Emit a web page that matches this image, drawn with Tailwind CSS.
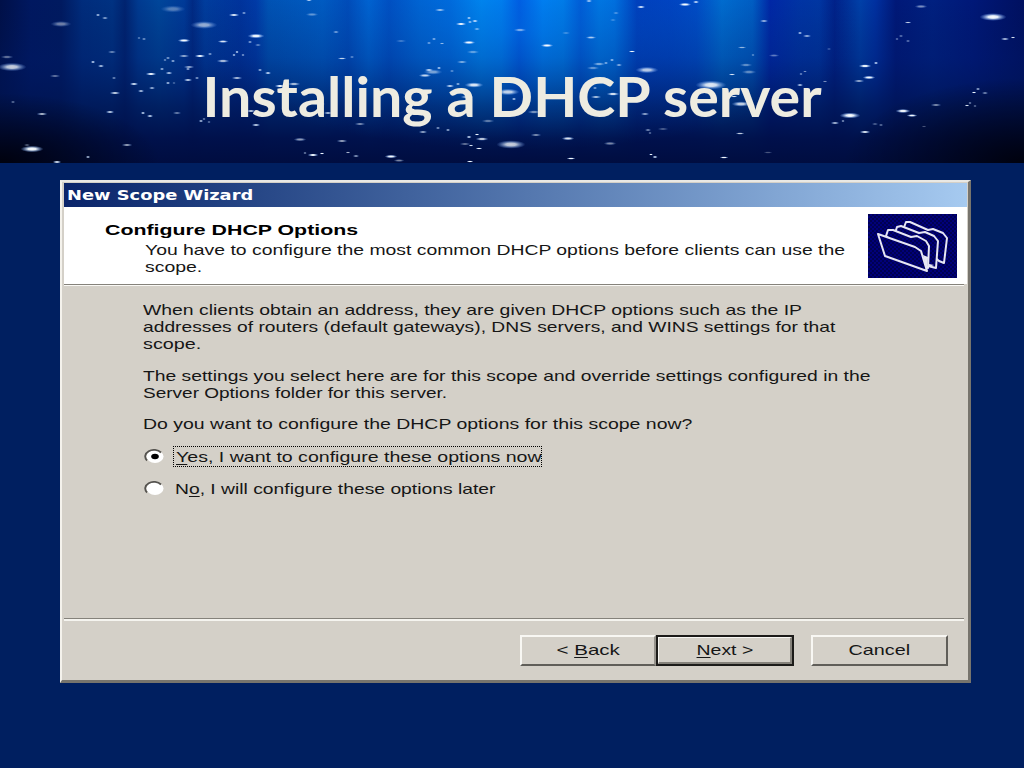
<!DOCTYPE html>
<html lang="en">
<head>
  <meta charset="UTF-8" />
  <title>Installing a DHCP server</title>
  <script src="https://cdn.jsdelivr.net/npm/@tailwindcss/browser@4"></script>
</head>
<body class="w-[1024px] h-[768px] overflow-hidden bg-[#001f60] font-['Liberation_Sans',sans-serif] text-[15px] text-[#161616]">
  <header class="relative h-[163px] overflow-hidden">
    <svg class="absolute inset-0" width="1024" height="163" viewBox="0 0 1024 163" preserveAspectRatio="none">
      <defs>
        <linearGradient id="rays" x1="0" x2="1" y1="0" y2="0">
          <stop offset="0" stop-color="#001048" />
          <stop offset=".03" stop-color="#001860" />
          <stop offset=".06" stop-color="#001a60" />
          <stop offset=".08" stop-color="#002c7c" />
          <stop offset=".11" stop-color="#003282" />
          <stop offset=".122" stop-color="#002370" />
          <stop offset=".135" stop-color="#003a90" />
          <stop offset=".155" stop-color="#00469a" />
          <stop offset=".18" stop-color="#003a98" />
          <stop offset=".188" stop-color="#002a84" />
          <stop offset=".2" stop-color="#003c9c" />
          <stop offset=".235" stop-color="#003098" />
          <stop offset=".25" stop-color="#0036a2" />
          <stop offset=".262" stop-color="#0050b0" />
          <stop offset=".315" stop-color="#0058bc" />
          <stop offset=".34" stop-color="#0044b0" />
          <stop offset=".36" stop-color="#0060cc" />
          <stop offset=".38" stop-color="#0046b8" />
          <stop offset=".41" stop-color="#0060cc" />
          <stop offset=".44" stop-color="#0068d8" />
          <stop offset=".47" stop-color="#008cf0" />
          <stop offset=".49" stop-color="#0082f0" />
          <stop offset=".507" stop-color="#0054e0" />
          <stop offset=".53" stop-color="#0084f4" />
          <stop offset=".55" stop-color="#0080e8" />
          <stop offset=".567" stop-color="#0054d0" />
          <stop offset=".585" stop-color="#0078e0" />
          <stop offset=".6" stop-color="#0070dc" />
          <stop offset=".622" stop-color="#0030b0" />
          <stop offset=".655" stop-color="#0038b8" />
          <stop offset=".68" stop-color="#0044c0" />
          <stop offset=".705" stop-color="#006ccc" />
          <stop offset=".735" stop-color="#005cc0" />
          <stop offset=".752" stop-color="#0020a0" />
          <stop offset=".78" stop-color="#0030a0" />
          <stop offset=".8" stop-color="#0034a0" />
          <stop offset=".815" stop-color="#002088" />
          <stop offset=".84" stop-color="#0040a8" />
          <stop offset=".855" stop-color="#0030a0" />
          <stop offset=".875" stop-color="#001878" />
          <stop offset=".91" stop-color="#002080" />
          <stop offset=".95" stop-color="#001878" />
          <stop offset="1" stop-color="#001060" />
        </linearGradient>
        <linearGradient id="depth" x1="0" x2="0" y1="0" y2="1">
          <stop offset="0" stop-color="#001550" stop-opacity="0" />
          <stop offset=".35" stop-color="#001860" stop-opacity=".3" />
          <stop offset=".65" stop-color="#001450" stop-opacity=".75" />
          <stop offset=".85" stop-color="#000f48" stop-opacity=".96" />
          <stop offset="1" stop-color="#000d40" />
        </linearGradient>
        <radialGradient id="glow" gradientUnits="userSpaceOnUse" cx="0" cy="0" r="1" gradientTransform="translate(520 30) scale(340 120)">
          <stop offset="0" stop-color="#0078f0" stop-opacity=".45" />
          <stop offset="1" stop-color="#0060d0" stop-opacity="0" />
        </radialGradient>
        <radialGradient id="corner">
          <stop offset="0" stop-color="#000008" stop-opacity=".9" />
          <stop offset="1" stop-color="#000008" stop-opacity="0" />
        </radialGradient>
        <radialGradient id="bubble">
          <stop offset="0" stop-color="#fff" />
          <stop offset=".35" stop-color="#f0f8ff" stop-opacity=".95" />
          <stop offset="1" stop-color="#70a8ff" stop-opacity="0" />
        </radialGradient>
      </defs>
      <rect width="1024" height="163" fill="url(#rays)" />
      <rect width="1024" height="163" fill="url(#depth)" />
      <rect width="1024" height="163" fill="url(#glow)" />
      <ellipse cx="0" cy="163" rx="160" ry="70" fill="url(#corner)" />
      <ellipse cx="1024" cy="163" rx="180" ry="85" fill="url(#corner)" />
      <g id="bubbles"></g>
    </svg>
    <h1 class="relative pt-[63px] text-center font-['Lato',sans-serif] text-[55px] leading-[66px] font-bold text-[#eeece1]"><span class="inline-block whitespace-nowrap" data-w="619">Installing a DHCP server</span></h1>
  </header>

  <main class="mt-[17px] ml-[60px] flex h-[503px] w-[911px] flex-col border-t-2 border-r-3 border-b-3 border-l-2 border-t-[#e9e8e4] border-r-[#77746d] border-b-[#77746d] border-l-[#f4f2ec] bg-[#d4d0c8] pt-px pr-px pl-0.5">
    <div class="h-6 bg-gradient-to-r from-[#0a246a] to-[#a6caf0] pl-[3px] font-['DejaVu_Sans',sans-serif] text-[14px] leading-6 font-bold text-white"><span class="inline-block origin-left whitespace-nowrap" data-w="186">New Scope Wizard</span></div>

    <div class="flex h-[77px] justify-between bg-white pr-[10px] pl-[41px]">
      <div class="pt-[14px]">
        <p class="h-5 leading-[18px] font-bold text-black"><span class="inline-block origin-left whitespace-nowrap" data-w="253">Configure DHCP Options</span></p>
        <div class="w-[700px] pl-10 leading-[17px]">
          <p class="h-[17px]"><span class="inline-block origin-left whitespace-nowrap" data-w="700">You have to configure the most common DHCP options before clients can use the</span></p>
          <p class="h-[17px]"><span class="inline-block origin-left whitespace-nowrap" data-w="57">scope.</span></p>
        </div>
      </div>
      <svg class="mt-[7px] h-16 w-[89px] shrink-0" viewBox="0 0 89 64">
        <defs>
          <pattern id="weave" width="4" height="4" patternUnits="userSpaceOnUse">
            <rect width="4" height="4" fill="#00007a" />
            <path d="M0 0h2v2H0zM2 2h2v2H2z" fill="#000052" />
          </pattern>
        </defs>
        <rect width="89" height="64" fill="url(#weave)" />
        <g fill="url(#weave)" stroke="#e6e6f4" stroke-width="2" stroke-linejoin="round">
          <path d="M35 16l3-8 4 0 18 8 5-1 10 4 4 5-3 25-5-2z" />
          <path d="M27 19l2-6 4-1 18 7 6-1 9 4 4 5-2 27-8-2z" />
          <path d="M18 22l2-6 5 0 18 7 6-1 9 5 3 5-1 22-7-2z" />
          <path d="M10 20l37 13 6 4 6 20-42-15z" />
        </g>
        <path d="M55 41l5 2-1 15zM61 50l5 1-5 2z" fill="#e6e6f4" />
      </svg>
    </div>

    <div class="mr-[3px] h-px bg-[#85827b]"></div>
    <div class="mr-[3px] h-px bg-[#faf9f5]"></div>

    <div class="h-[332px] pt-[15px] pl-[79px] leading-[17px]">
      <p class="h-[17px]"><span class="inline-block origin-left whitespace-nowrap" data-w="659">When clients obtain an address, they are given DHCP options such as the IP</span></p>
      <p class="h-[17px]"><span class="inline-block origin-left whitespace-nowrap" data-w="692">addresses of routers (default gateways), DNS servers, and WINS settings for that</span></p>
      <p class="h-[17px]"><span class="inline-block origin-left whitespace-nowrap" data-w="58">scope.</span></p>
      <p class="mt-[15px] h-[17px]"><span class="inline-block origin-left whitespace-nowrap" data-w="727">The settings you select here are for this scope and override settings configured in the</span></p>
      <p class="h-[17px]"><span class="inline-block origin-left whitespace-nowrap" data-w="304">Server Options folder for this server.</span></p>
      <p class="mt-[14px] h-[17px]"><span class="inline-block origin-left whitespace-nowrap" data-w="549">Do you want to configure the DHCP options for this scope now?</span></p>

      <div class="mt-[14px] flex h-[21px] items-center">
        <svg class="mr-[9px] ml-px h-4 w-5" viewBox="0 0 20 16">
          <ellipse cx="11" cy="7.500" rx="8.500" ry="6.500" fill="#fff" />
          <path d="M3 11.500a8 6 0 0 1 14-8" fill="none" stroke="#55534f" stroke-width="1.800" />
          <ellipse cx="11" cy="7.500" rx="3.800" ry="2.800" fill="#000" />
        </svg>
        <div class="h-[21px] w-[369px] border border-dotted border-black pl-0.5 leading-[19px]"><span class="inline-block origin-left whitespace-nowrap" data-w="365"><u class="underline-offset-2">Y</u>es, I want to configure these options now</span></div>
      </div>
      <div class="mt-[11px] flex h-[21px] items-center">
        <svg class="mr-[11px] ml-px h-4 w-5" viewBox="0 0 20 16">
          <ellipse cx="11" cy="7.500" rx="8.500" ry="6.500" fill="#fff" />
          <path d="M3 11.500a8 6 0 0 1 14-8" fill="none" stroke="#55534f" stroke-width="1.800" />
        </svg>
        <span class="inline-block origin-left whitespace-nowrap" data-w="320">N<u class="underline-offset-2">o</u>, I will configure these options later</span>
      </div>
    </div>

    <div class="mr-[3px] h-px bg-[#85827b]"></div>
    <div class="mr-[3px] h-0.5 bg-[#f5f4ef]"></div>

    <div class="flex pt-[14px] pr-[19px] justify-end">
      <button class="h-[31px] w-[136px] border-2 border-t-[#f8f7f3] border-r-[#96938c] border-b-[#605e59] border-l-[#f8f7f3]"><span class="inline-block whitespace-nowrap" data-w="63">&lt; <u class="underline-offset-2">B</u>ack</span></button>
      <button class="h-[31px] w-[138px] border-2 border-[#1c1b19]"><span class="flex h-full items-center justify-center border-t border-r-2 border-b-2 border-l border-t-[#f8f7f3] border-r-[#85827b] border-b-[#85827b] border-l-[#f8f7f3]"><span class="inline-block whitespace-nowrap" data-w="57"><u class="underline-offset-2">N</u>ext &gt;</span></span></button>
      <button class="ml-[17px] h-[31px] w-[137px] border-2 border-t-[#f8f7f3] border-r-[#605e59] border-b-[#605e59] border-l-[#f8f7f3]"><span class="inline-block whitespace-nowrap" data-w="62">Cancel</span></button>
    </div>
  </main>

  <script>
    // x, y, half width, opacity
    const bubbles = [
      [12,67,14,.8],[7,57,6,.4],[61,24,10,.45],[55,76,5,.4],[98,15,2,.9],[105,18,3,.7],[112,52,4,.5],[93,62,2,1],[101,66,3,.9],
      [114,78,2,.6],[115,93,5,.8],[134,84,4,1],[141,91,3,.9],[152,88,3,.8],[151,74,5,1],[169,73,3.500,.9],[162,69,2,.8],[13,102,2,.5],
      [42,114,5,.7],[110,112,4,.9],[143,113,2,1],[150,116,3,1],[32,149,11,1],[27,145,3,.4],[57,162,4,1],[88,157,2,.9],[127,145,5,.6],
      [173,9,12,.35],[204,25,13,.6],[184,40.500,6,1],[223,41.500,5,.9],[234,15,5,.9],[244,13,2,.7],[256,36,8,1],[250,42,2,.7],[258,45,3,.5],
      [200,56,5,1],[184,56,5,.6],[223,61,6,.7],[210,54,2,.7],[189,67,5,.6],[188,80,4,.9],[197,78,2,.7],[188,69,2,.8],[168,58,2,.7],
      [173,61,2,.8],[165,60,1.500,.6],[168,83,2,.9],[174,83,1.500,.4],[139,38,1.500,.5],[144,39,2,.6],[237,52,1.500,1],[243,55,1.500,.7],
      [234,55,1.500,.9],[260,70,2,.8],[268,73,3,1],[237,78,5,.7],[312,14.500,6,.4],[309,0,3,1],[336,32,3,.6],[177,113,4,.5],[251,111,4,.9],
      [201,121,2,.9],[204,119,1.500,.6],[209,122,1.500,.5],[256,125,4,.9],[300,139.500,6,.6],[313,155,5,1],[305,153,1.500,.6],[322,153.500,2,1],
      [280,86,5,1],[294,84,6,.7],[319,104,6,.5],[328,113,4,.8],[440,10,5,.6],[461,24,5,1],[475,21,3,1],[469,18,2,.9],[470,22,2,.8],
      [477,29,3,.6],[469,42.500,6,1],[473,52,6,.4],[520,30,6,.5],[547,45.500,6,1],[566,33,4,.3],[591,37.500,5,.7],[632,51.500,3,1],[641,7,4,1],
      [589,1,3,.8],[616,13,3,.4],[613,20,3,.3],[342,58.500,4,.8],[352,57,2,.5],[434,39,2,.7],[429,43,2,.6],[442,43.500,2,.6],[401,41,5,.25],
      [462,62,5,.5],[429,70,4,.9],[433,72,9,.5],[425,75.500,6,.8],[439,68,2,.9],[452,71,2,.5],[450,86,4,.9],[458,84,2,.8],[474,85,9,.9],
      [467,97,6,.7],[508,92,11,.8],[514,99,2,.9],[599,64,6,.5],[593,68,6,.4],[612,60,2,.8],[606,63,2,.7],[619,65,3,.7],[647,70,11,.75],
      [596,97,5,.7],[613,94,6,.9],[595,88,2,.7],[534,112,6,.5],[645,114,4,.7],[360,124,5,.5],[423,132,4,.7],[488,121,6,.4],[438,128,2,.7],
      [448,130,2,.8],[469,137,2.500,1],[477,134.500,2,1],[482,139,6,.8],[465,144,5,.4],[471,145.500,2,.9],[479,148.500,3,1],[511,144.500,14,.8],
      [536,135,5,.5],[568,138.500,6,.9],[610,143.500,6,.5],[571,158.500,4,1],[342,141,5,.6],[348,152.500,2,.7],[356,156,3,.7],[391,156.500,6,1],
      [399,160.500,5,.5],[470,161.500,3,1],[648,130,3,.6],[650,133,1.500,.5],[663,129,5,.3],[651,154.500,1.500,1],[655,157,2.500,1],
      [685,4.500,6,1],[696,2,3,1],[764,21,4,.7],[800,33,2,.9],[807,36,4,.7],[921,6.500,6,.5],[993,17,13,1],[1005,39,4,.8],[1013,37.500,2,.9],
      [908,22.500,3,.8],[901,36,2,.5],[908,41,2,.5],[897,39,1.500,.5],[742,47.500,4,.6],[746,65,6,.4],[749,72,7,.4],[753,55,1.500,.5],
      [774,55.500,5,.4],[732,74.500,3,.9],[711,85,15,.9],[741,104,9,.8],[734,96.500,3,.9],[800,85,3,.9],[801,74,1.500,.6],[805,71.500,1.500,.5],
      [825,81.500,2,.5],[829,49,2,.3],[865,66,6,1],[876,63,2,1],[869,77.500,6,1],[859,81,5,.6],[850,115.500,10,1],[835,123,4,.8],[843,121,1.500,.7],
      [865,132,5,.9],[903,111,7,1],[912,115.500,5,1],[936,105,5,.5],[974,92.500,2,1],[978,89,2,.8],[985,93,3,.6],[967,105.500,2,.9],[970,103,1.500,.6],
      [975,106,1.500,.5],[740,133.500,4,.8],[724,157.500,4,1],[768,152.500,4,.3],[875,124,3,.4],[881,125,2,.5],[924,126.500,2,.3]
    ];
    document.getElementById("bubbles").innerHTML = bubbles.map(([x, y, r, o]) =>
      `<ellipse cx="${x}" cy="${y}" rx="${r + 0.5}" ry="${Math.max(1.1, r * 0.3)}" fill="url(#bubble)" opacity="${o}" />`
    ).join("");

    // stretch every line of text to its own width, again whenever its natural size changes
    function fit(el) {
      if (el.offsetWidth) el.style.transform = `scaleX(${el.dataset.w / el.offsetWidth})`;
    }
    const observer = new ResizeObserver(entries => entries.forEach(e => fit(e.target)));
    document.querySelectorAll("[data-w]").forEach(el => {
      fit(el);
      observer.observe(el);
    });
    window.addEventListener("load", () => document.querySelectorAll("[data-w]").forEach(fit));
  </script>
</body>
</html>
